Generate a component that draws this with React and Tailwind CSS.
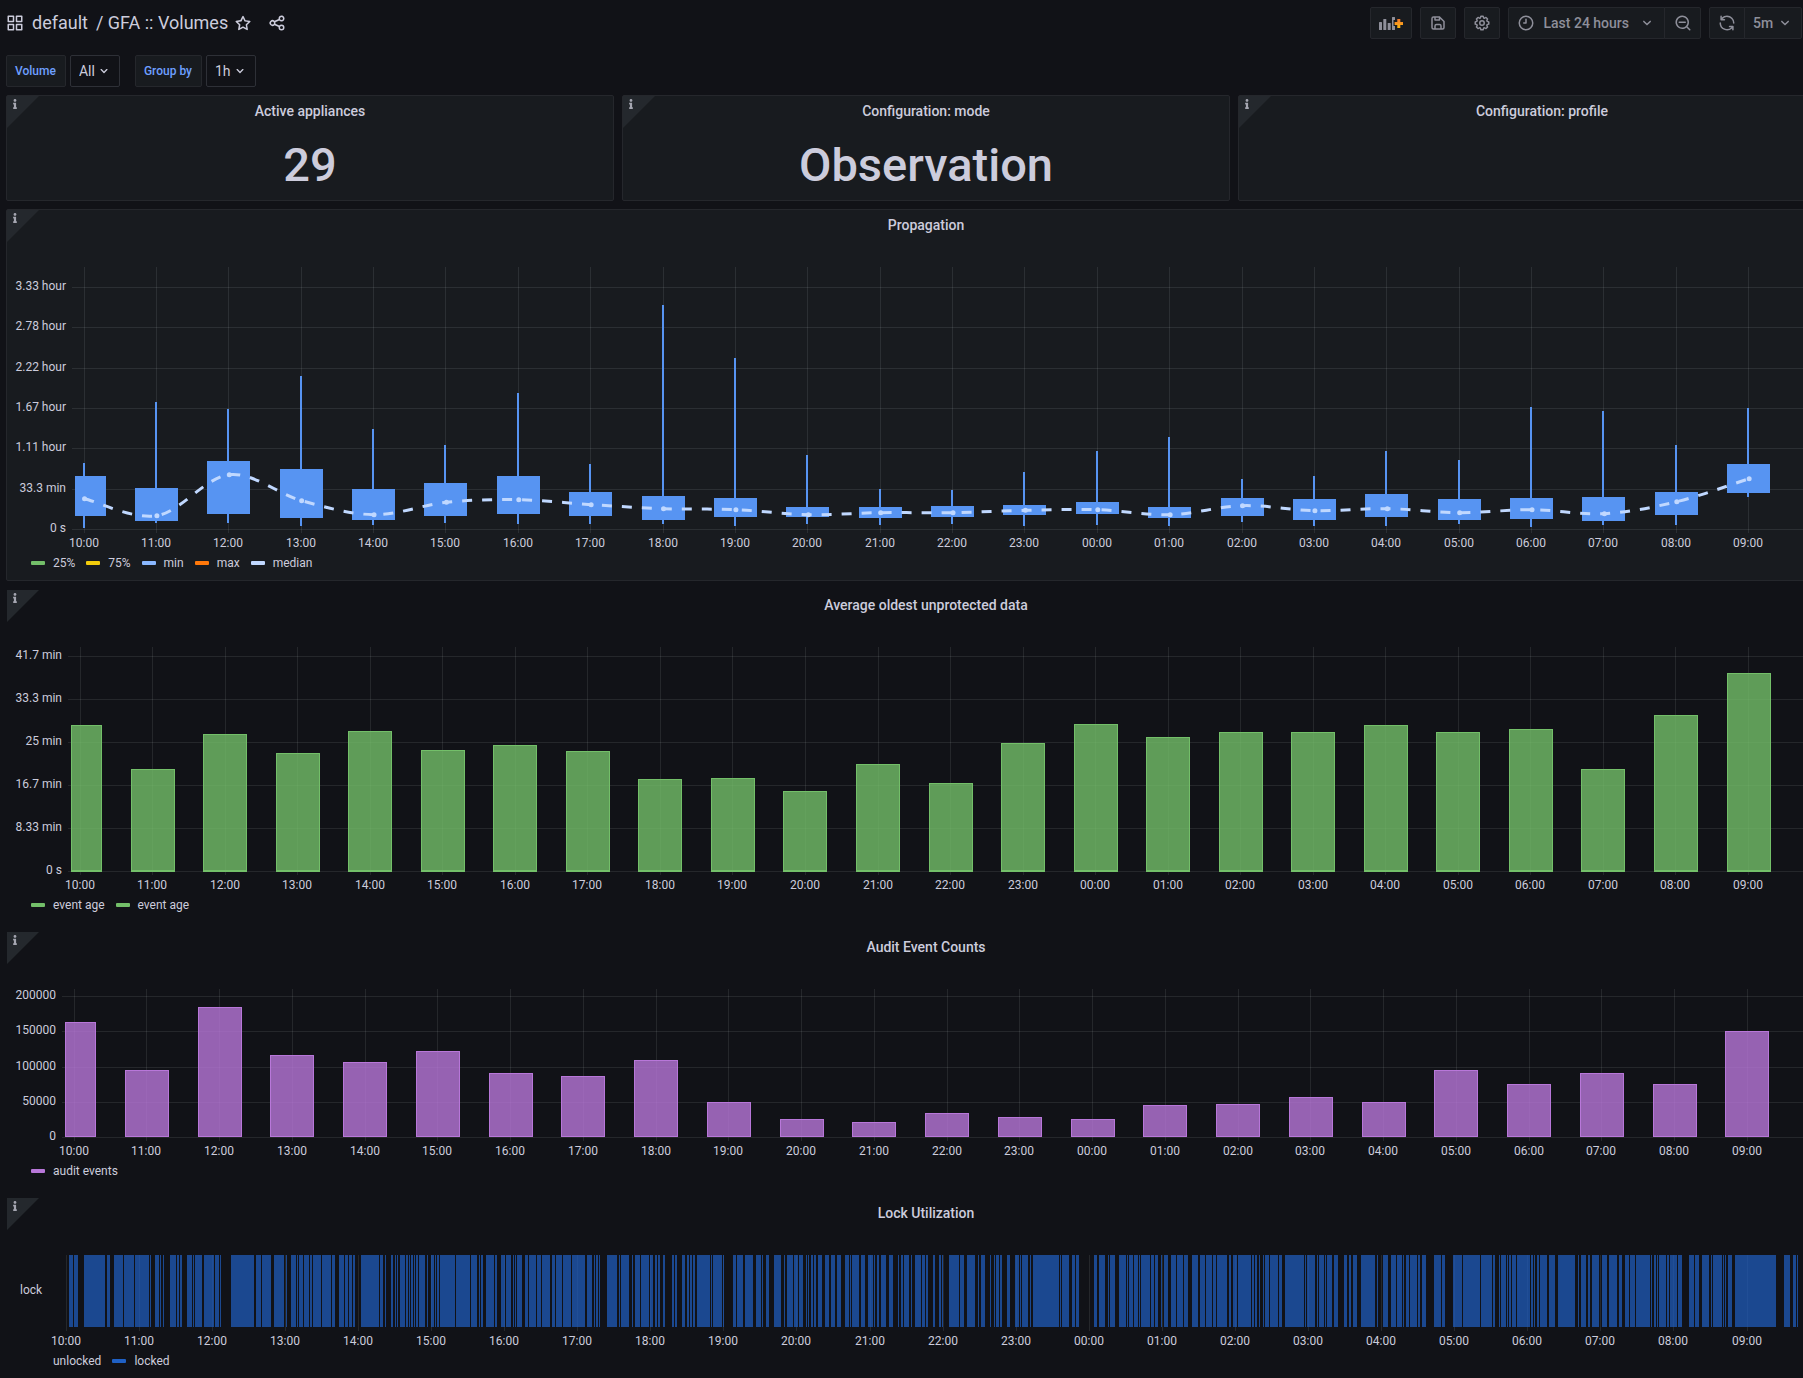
import { useLayoutEffect, useRef, useState } from "react";
import { FaInfo } from "react-icons/fa";

const ICONS = {
  apps: "M10,13H3a1,1,0,0,0-1,1v7a1,1,0,0,0,1,1h7a1,1,0,0,0,1-1V14A1,1,0,0,0,10,13ZM9,20H4V15H9ZM21,2H14a1,1,0,0,0-1,1v7a1,1,0,0,0,1,1h7a1,1,0,0,0,1-1V3A1,1,0,0,0,21,2ZM20,9H15V4h5Zm1,4H14a1,1,0,0,0-1,1v7a1,1,0,0,0,1,1h7a1,1,0,0,0,1-1V14A1,1,0,0,0,21,13Zm-1,7H15V15h5ZM10,2H3A1,1,0,0,0,2,3v7a1,1,0,0,0,1,1h7a1,1,0,0,0,1-1V3A1,1,0,0,0,10,2ZM9,9H4V4H9Z",
  star: "M22,9.67A1,1,0,0,0,21.14,9l-5.69-.83L12.9,3a1,1,0,0,0-1.8,0L8.55,8.16,2.86,9a1,1,0,0,0-.81.68,1,1,0,0,0,.25,1l4.13,4-1,5.68A1,1,0,0,0,6.9,21.44L12,18.77l5.1,2.67a.93.93,0,0,0,.46.12,1,1,0,0,0,.59-.19,1,1,0,0,0,.4-1l-1-5.68,4.13-4A1,1,0,0,0,22,9.67Zm-6.15,4a1,1,0,0,0-.29.88l.72,4.2-3.76-2a1.06,1.06,0,0,0-.94,0l-3.76,2,.72-4.2a1,1,0,0,0-.29-.88l-3-3,4.21-.61a1,1,0,0,0,.76-.55L12,5.7l1.88,3.82a1,1,0,0,0,.76.55l4.21.61Z",
  share: "M18,14a4,4,0,0,0-3.08,1.48l-5.1-2.35a3.64,3.64,0,0,0,0-2.26l5.1-2.35A4,4,0,1,0,14,6a4.17,4.17,0,0,0,.07.71L8.79,9.14a4,4,0,1,0,0,5.72l5.28,2.43A4.17,4.17,0,0,0,14,18a4,4,0,1,0,4-4ZM18,4a2,2,0,1,1-2,2A2,2,0,0,1,18,4ZM6,14a2,2,0,1,1,2-2A2,2,0,0,1,6,14Zm12,6a2,2,0,1,1,2-2A2,2,0,0,1,18,20Z",
  save: "m20.71 9.29-6-6a1 1 0 0 0-.32-.21A1.09 1.09 0 0 0 14 3H6a3 3 0 0 0-3 3v12a3 3 0 0 0 3 3h12a3 3 0 0 0 3-3v-8a1 1 0 0 0-.29-.71ZM9 5h4v2H9Zm6 14H9v-3a1 1 0 0 1 1-1h4a1 1 0 0 1 1 1Zm4-1a1 1 0 0 1-1 1h-1v-3a3 3 0 0 0-3-3h-4a3 3 0 0 0-3 3v3H6a1 1 0 0 1-1-1V6a1 1 0 0 1 1-1h1v3a1 1 0 0 0 1 1h6a1 1 0 0 0 1-1V6.41l4 4Z",
  cog: "M21.32,9.55l-1.89-.63.89-1.78A1,1,0,0,0,20.13,6L18,3.87a1,1,0,0,0-1.15-.19l-1.78.89-.63-1.89A1,1,0,0,0,13.5,2h-3a1,1,0,0,0-.95.68L8.92,4.57,7.14,3.68A1,1,0,0,0,6,3.87L3.87,6a1,1,0,0,0-.19,1.15l.89,1.78-1.89.63A1,1,0,0,0,2,10.5v3a1,1,0,0,0,.68.95l1.89.63-.89,1.78A1,1,0,0,0,3.87,18L6,20.13a1,1,0,0,0,1.15.19l1.78-.89.63,1.89a1,1,0,0,0,.95.68h3a1,1,0,0,0,.95-.68l.63-1.89,1.78.89A1,1,0,0,0,18,20.13L20.13,18a1,1,0,0,0,.19-1.15l-.89-1.78,1.89-.63A1,1,0,0,0,22,13.5v-3A1,1,0,0,0,21.32,9.55ZM20,12.78l-1.2.4A2,2,0,0,0,17.64,16l.57,1.14-1.1,1.1L16,17.64a2,2,0,0,0-2.79,1.16l-.4,1.2H11.22l-.4-1.2A2,2,0,0,0,8,17.64l-1.14.57-1.1-1.1L6.36,16A2,2,0,0,0,5.2,13.18L4,12.78V11.22l1.2-.4A2,2,0,0,0,6.36,8L5.79,6.89l1.1-1.1L8,6.36A2,2,0,0,0,10.82,5.2l.4-1.2h1.56l.4,1.2A2,2,0,0,0,16,6.36l1.14-.57,1.1,1.1L17.64,8a2,2,0,0,0,1.16,2.79l1.2.4ZM12,8a4,4,0,1,0,4,4A4,4,0,0,0,12,8Zm0,6a2,2,0,1,1,2-2A2,2,0,0,1,12,14Z",
  clock: "M12,2A10,10,0,1,0,22,12,10,10,0,0,0,12,2Zm0,18a8,8,0,1,1,8-8A8,8,0,0,1,12,20ZM12,6a1,1,0,0,0-1,1v4H9a1,1,0,0,0,0,2h3a1,1,0,0,0,1-1V7A1,1,0,0,0,12,6Z",
  zoomOut: "M21.71,20.29,18,16.61A9,9,0,1,0,16.61,18l3.68,3.68a1,1,0,0,0,1.42,0A1,1,0,0,0,21.71,20.29ZM11,18a7,7,0,1,1,7-7A7,7,0,0,1,11,18Zm4-8H7a1,1,0,0,0,0,2h8a1,1,0,0,0,0-2Z",
  sync: "M19.91,15.51H15.38a1,1,0,0,0,0,2h2.4A8,8,0,0,1,4,12a1,1,0,1,0-2,0,10,10,0,0,0,16.88,7.23V21a1,1,0,0,0,2,0V16.5A1,1,0,0,0,19.91,15.51ZM12,2A10,10,0,0,0,5.12,4.77V3a1,1,0,0,0-2,0V7.5a1,1,0,0,0,1,1h4.5a1,1,0,0,0,0-2H6.22A8,8,0,0,1,20,12a1,1,0,0,0,2,0A10,10,0,0,0,12,2Z",
  angleDown: "M17,9.17a1,1,0,0,0-1.41,0L12,12.71,8.46,9.17a1,1,0,0,0-1.41,0,1,1,0,0,0,0,1.42l4.24,4.24a1,1,0,0,0,1.42,0L17,10.59A1,1,0,0,0,17,9.17Z",
};

function Icon({ name, size = 18, className = "" }) {
  return (
    <svg width={size} height={size} viewBox="0 0 24 24" fill="currentColor" aria-hidden="true" className={`shrink-0 ${className}`}>
      <path d={ICONS[name]} />
    </svg>
  );
}

function AddPanelIcon() {
  return (
    <svg width="24" height="16" viewBox="0 0 24 16" aria-hidden="true">
      <defs>
        <linearGradient id="plus" x1="0" y1="0" x2="0" y2="1">
          <stop offset="0" stopColor="#f2762e" />
          <stop offset="1" stopColor="#fbb90f" />
        </linearGradient>
      </defs>
      <g fill="currentColor">
        <rect x="0" y="7" width="3" height="8" rx="0.5" />
        <rect x="4.3" y="4" width="3" height="11" rx="0.5" />
        <rect x="8.7" y="8" width="3" height="7" rx="0.5" />
        <path d="M13 2.5a.5.5 0 0 1 .5-.5h2a.5.5 0 0 1 .5.5V5h-1.500v6H16v3.500a.5.5 0 0 1-.5.5h-2a.5.5 0 0 1-.5-.5z" />
      </g>
      <path d="M18.300 4h3v3H24v3h-2.700v3h-3v-3h-2.700V7h2.700z" fill="url(#plus)" />
    </svg>
  );
}

const HOURS = Array.from({ length: 24 }, (_, i) => `${String((i + 10) % 24).padStart(2, "0")}:00`);

// Box plot samples: [max, 75%, 25%, min, median]; 121 units are 33.3 minutes.
const PROPAGATION = [
  [199, 160, 38, 4, 91], [382, 124, 23, 17, 40], [361, 205, 44, 17, 163], [460, 181, 32, 8, 85],
  [301, 121, 26, 11, 43], [253, 139, 38, 17, 80], [409, 160, 44, 14, 88], [196, 112, 38, 14, 73],
  [673, 100, 28, 14, 61], [514, 94, 35, 8, 58], [223, 67, 35, 14, 43], [121, 67, 32, 11, 49],
  [118, 70, 35, 14, 49], [172, 73, 41, 8, 56], [235, 82, 44, 11, 58], [277, 67, 32, 8, 43],
  [151, 94, 38, 20, 70], [160, 91, 26, 8, 55], [235, 106, 35, 8, 61], [208, 91, 26, 14, 49],
  [367, 94, 29, 5, 58], [355, 97, 23, 11, 46], [253, 112, 41, 11, 82], [364, 196, 109, 97, 151],
];

// Average age; 129 units are 8.33 minutes.
const EVENT_AGE = [
  439, 307, 412, 355, 421, 364, 379, 361, 277, 280, 241, 322, 265, 385, 442, 403, 418, 418, 439, 418, 427, 307, 469, 595,
];

// Event counts; 106 units are 50000 events.
const AUDIT_EVENTS = [
  345, 202, 391, 247, 226, 259, 193, 184, 232, 106, 55, 46, 73, 61, 55, 97, 100, 121, 106, 202, 160, 193, 160, 319,
];

// Locked spans in three recording blocks: `from` and `unit` are in hours after 10:00.
const LOCKED = [
  {
    from: -0.9057,
    unit: 0.0052353,
    spans: "180-191,192.5-204,220-274,280-287,298-322,324-351,353-390,392-395,405-416,418-421,426-429,444-461,463-468,470-476,489-502,504-507,509-528,533-560,562-573,575-578,604-665,669-683,685-708,716-743,747-750,760-775,777-779,781-792,794-809,811-816,818-820,822-839,841-866,868-875,886-899,902-909,912-920,923-928,943-991,993-1001,1006-1009,1022-1027,1032-1035,1037-1040,1045-1058,1061-1066,1069-1071,1074-1079,1082-1085,1087-1092,1095-1111,1116-1119,1126-1134,1136-1139,1142-1147,1150-1189,1191-1229,1231-1247,1252-1254,1257-1262,1270-1291,1294-1299,1309-1320,1322-1335,1341-1343,1346-1348,1351-1364,1372-1380,1382-1401,1403-1414,1416-1437,1443-1450,1453-1469,1471-1492,1495-1529,1534-1547,1552-1555,1557-1562,1565-1568",
  },
  {
    from: 7.3033,
    unit: 0.0052353,
    spans: "18-44,50-52,55-76,84-86,91-105,107-128,131-139,144-149,152-157,165-170,188-193,196-201,214-222,227-233,235-240,243-248,253-287,290-292,295-319,321-324,348-355,358-374,379-400,408-421,423-426,434-442,455-473,481-483,489-504,507-517,520-531,538-541,543-546,551-557,559-564,570-580,588-598,604-614,619-630,640-651,653-656,659-677,682-693,700-714,716-719,724-729,734-747,755-766,779-781,787-792,794-808,813-815,823-839,841-849,852-857,870-875,886-891,893-896,912-938,941-951,959-980,988-990,996-1006,1019-1022,1030-1032,1035-1043,1045-1051,1064-1071,1085-1095,1097-1100,1103-1120,1124-1126,1132-1200,1202-1205,1207-1226,1233-1241,1244-1252,1291-1299,1304-1320,1328-1330,1333-1346,1356-1375,1377-1380,1382-1393,1396-1406,1408-1411,1414-1437,1440-1448,1450-1458,1466-1469,1474-1484,1492-1505,1508-1524,1526-1537,1547-1563",
  },
  {
    from: 15.5124,
    unit: 0.0052616,
    spans: "0-13,16-31,34-42,44-70,75-82,86-96,99-133,135-140,143-148,153-156,164-167,169-179,182-203,205-213,221-270,273-275,278-299,304-307,309-322,325-327,330-343,348-359,374-382,387-393,398-408,419-455,460-463,476-489,497-510,512-525,528-530,536-544,546-564,567-572,577-588,608-627,629-637,658-681,684-728,731-759,762-767,772-774,777-780,783-796,798-801,803-809,811-822,824-858,861-866,868-871,876-882,884-902,908-923,931-975,983-985,991-1004,1009-1014,1019-1038,1045-1058,1064-1084,1090-1097,1105-1116,1118-1131,1134-1170,1172-1175,1181-1186,1188-1191,1194-1212,1214-1220,1222-1240,1243-1253,1272-1285,1287-1298,1305-1324,1329-1331,1334-1357,1360-1362,1365-1368,1373-1383,1391-1498,1519-1534,1542-1550,1552-1555",
  },
].flatMap(({ from, unit, spans }) =>
  spans.split(",").map((span) => span.split("-").map((n) => from + Number(n) * unit))
);

const GRID = "rgba(240,250,255,0.09)";
const TOP = 27;

// Shared frame: measures its width, draws the grid and axis labels, then the series on top.
function Chart({ label, base, left, right, ticks = [], step = 0, children }) {
  const ref = useRef(null);
  const [width, setWidth] = useState(1200);
  useLayoutEffect(() => {
    const measure = () => setWidth(ref.current.getBoundingClientRect().width);
    measure();
    const observer = new ResizeObserver(measure);
    observer.observe(ref.current);
    return () => observer.disconnect();
  }, []);
  const perHour = (width - right - left) / 24;
  const x = (hour) => left + (hour + 0.125) * perHour;
  const height = base + 24;
  return (
    <div ref={ref} className="w-full">
      <svg width={width} height={height} role="img" aria-label={label} className="block text-xs" fill="#ccccdc">
        <g fill={GRID} shapeRendering="crispEdges">
          {HOURS.map((h, i) => (
            <rect key={h} x={Math.floor(x(i))} y={TOP} width="1" height={base + 4 - TOP} />
          ))}
          {ticks.map((t, i) => (
            <rect key={t} x={left - 3} y={Math.round(base - i * step)} width={width} height="1" />
          ))}
        </g>
        {ticks.map((t, i) => (
          <text key={t} x={left - 9} y={Math.round(base - i * step) + 3} textAnchor="end">
            {t}
          </text>
        ))}
        {children(x)}
        {HOURS.map((h, i) => (
          <text key={h} x={Math.floor(x(i))} y={base + 18} textAnchor="middle">
            {h}
          </text>
        ))}
      </svg>
    </div>
  );
}

function smoothPath(points) {
  const at = (i) => points[Math.max(0, Math.min(points.length - 1, i))];
  let d = `M${at(0)[0]} ${at(0)[1]}`;
  for (let i = 0; i < points.length - 1; i++) {
    const [p0, p1, p2, p3] = [at(i - 1), at(i), at(i + 1), at(i + 2)];
    d += `C${p1[0] + (p2[0] - p0[0]) / 6} ${p1[1] + (p2[1] - p0[1]) / 6} ${p2[0] - (p3[0] - p1[0]) / 6} ${p2[1] - (p3[1] - p1[1]) / 6} ${p2[0]} ${p2[1]}`;
  }
  return d;
}

function PropagationChart() {
  const base = 289;
  const left = 68;
  const y = (v) => base - v / 3;
  return (
    <Chart
      label="Propagation"
      base={base}
      left={left}
      right={33}
      step={40.33}
      ticks={["0 s", "33.3 min", "1.11 hour", "1.67 hour", "2.22 hour", "2.78 hour", "3.33 hour"]}
    >
      {(x) => {
        const points = PROPAGATION.map((d, i) => [x(i) + 0.5, y(d[4])]);
        return (
          <>
            <g fill="#5794f2" shapeRendering="crispEdges">
              {PROPAGATION.map(([max, high, low, min], i) => {
                const c = Math.floor(x(i));
                const start = Math.max(left, c - 21);
                return (
                  <g key={i}>
                    <rect x={c - 1} y={y(max)} width="2" height={y(min) - y(max)} />
                    <rect x={start} y={y(high)} width={c + 22 - start} height={y(low) - y(high)} />
                  </g>
                );
              })}
            </g>
            <path d={smoothPath(points)} fill="none" stroke="#c0d8ff" strokeWidth="3" strokeDasharray="10 10" />
            <g fill="#c0d8ff">
              {points.map(([px, py], i) => (
                <circle key={i} cx={px} cy={py} r="2.5" />
              ))}
            </g>
          </>
        );
      }}
    </Chart>
  );
}

function BarChart({ label, data, color, base, left, right, step, ticks, foot }) {
  return (
    <Chart label={label} base={base} left={left} right={right} step={step} ticks={ticks}>
      {(x) => (
        <g fill={color}>
          {data.map((v, i) => {
            const full = Math.round(x(i) - 22);
            const start = Math.max(left, full);
            const width = full + 44 - start;
            const top = Math.round(base - v / 3);
            const bottom = base + foot;
            return (
              <g key={i}>
                <rect x={start} y={top} width={width} height={bottom - top} fillOpacity="0.8" />
                <rect x={start + 0.5} y={top + 0.5} width={width - 1} height={bottom - top - 1} fill="none" stroke={color} />
                {foot > 0 && <rect x={start} y={bottom - 2} width={width} height="2" />}
              </g>
            );
          })}
        </g>
      )}
    </Chart>
  );
}

function LockChart() {
  return (
    <Chart label="Lock Utilization" base={99} left={50} right={34}>
      {(x) => (
        <>
          <text x="13" y="66">lock</text>
          <g fill="#1f60c4" fillOpacity="0.7" shapeRendering="crispEdges">
            {LOCKED.map(([a, b], i) => (
              <rect key={i} x={x(a)} y={TOP} width={x(b) - x(a)} height={72} />
            ))}
          </g>
        </>
      )}
    </Chart>
  );
}

function Legend({ items }) {
  return (
    <ul className="flex h-5 items-center gap-[11px] pl-6 text-xs">
      {items.map(([name, color], i) => (
        <li key={i} className="flex items-center gap-2">
          <span className="h-1 w-3.5 rounded-[1px]" style={{ backgroundColor: color }} />
          {name}
        </li>
      ))}
    </ul>
  );
}

function Panel({ title, plain = false, children }) {
  return (
    <section
      className={`relative rounded-xs border ${plain ? "border-transparent" : "border-[#25272c] bg-[#181b1f]"}`}
    >
      <button aria-label={`About ${title}`} className="absolute top-0 left-0 size-8 bg-[#24282d] [clip-path:polygon(0_0,100%_0,0_100%)]">
        <FaInfo className="absolute top-[3px] left-[3px] size-2.5 text-[#a5a6b1]" />
      </button>
      <h2 className="h-[30px] text-center text-sm leading-[30px] font-medium">{title}</h2>
      {children}
    </section>
  );
}

function StatPanel({ title, value }) {
  return (
    <Panel title={title}>
      <p className="flex h-[74px] items-center justify-center pt-0.5 text-[47px] leading-none font-medium">{value}</p>
    </Panel>
  );
}

function Variable({ id, label, value }) {
  return (
    <div className="flex gap-1">
      <label htmlFor={id} className="flex h-8 items-center rounded-xs border border-[#25272c] bg-[#181b1f] pr-[9px] pl-2 text-xs font-medium text-[#6e9fff]">
        {label}
      </label>
      <div className="relative flex">
        <select id={id} className="h-8 w-[50px] appearance-none rounded-xs border border-[#2e3037] bg-[#111217] pl-2 text-sm">
          <option>{value}</option>
        </select>
        <Icon name="angleDown" size={16} className="pointer-events-none absolute top-2 right-2" />
      </div>
    </div>
  );
}

const TOOL =
  "flex h-8 items-center justify-center border border-[#25272c] bg-[#181b1f] text-[#8e8f9a]";

export default function App() {
  return (
    <main className="min-h-screen overflow-hidden bg-[#111217] pt-[7px] pl-1.5 font-[Roboto,sans-serif] text-[#ccccdc]">
      <header className="flex items-center justify-between pr-px">
        <div className="flex items-center">
          <Icon name="apps" />
          <h1 className="flex gap-2 pr-1.5 pl-2 text-lg leading-8">
            <a href="#folder">default</a>
            <a href="#dashboard">/ GFA :: Volumes</a>
          </h1>
          <button aria-label="Mark as favorite">
            <Icon name="star" />
          </button>
          <button aria-label="Share dashboard" className="ml-4">
            <Icon name="share" />
          </button>
        </div>
        <div className="flex gap-2">
          <button aria-label="Add panel" className={`${TOOL} w-[42px] rounded-xs`}>
            <AddPanelIcon />
          </button>
          <button aria-label="Save dashboard" className={`${TOOL} w-9 rounded-xs`}>
            <Icon name="save" />
          </button>
          <button aria-label="Dashboard settings" className={`${TOOL} w-9 rounded-xs`}>
            <Icon name="cog" />
          </button>
          <div className="flex">
            <button className={`${TOOL} gap-2 rounded-l-xs pr-2 pl-2 text-sm font-medium`}>
              <Icon name="clock" />
              <span className="pr-px">Last 24 hours</span>
              <Icon name="angleDown" />
            </button>
            <button aria-label="Zoom out" className={`${TOOL} -ml-px w-[37px] rounded-r-xs`}>
              <Icon name="zoomOut" />
            </button>
          </div>
          <div className="flex">
            <button aria-label="Refresh" className={`${TOOL} w-9 rounded-l-xs`}>
              <Icon name="sync" />
            </button>
            <div className="relative -ml-px flex">
              <select aria-label="Refresh interval" className={`${TOOL} w-[58px] appearance-none rounded-r-xs pl-2 text-sm font-medium`}>
                <option>5m</option>
              </select>
              <Icon name="angleDown" className="pointer-events-none absolute top-[7px] right-2 text-[#8e8f9a]" />
            </div>
          </div>
        </div>
      </header>

      <div className="mt-4 flex gap-[15px]">
        <Variable id="volume" label="Volume" value="All" />
        <Variable id="group-by" label="Group by" value="1h" />
      </div>

      <div className="-mr-[43px] mt-2 grid gap-2">
        <div className="grid grid-cols-3 gap-2">
          <StatPanel title="Active appliances" value="29" />
          <StatPanel title="Configuration: mode" value="Observation" />
          <StatPanel title="Configuration: profile" />
        </div>

        <Panel title="Propagation">
          <PropagationChart />
          <div className="pb-[7px]">
            <Legend
              items={[["25%", "#73bf69"], ["75%", "#f2cc0c"], ["min", "#8ab8ff"], ["max", "#ff780a"], ["median", "#c0d8ff"]]}
            />
          </div>
        </Panel>

        <Panel title="Average oldest unprotected data" plain>
          <BarChart
            label="Average oldest unprotected data"
            data={EVENT_AGE}
            color="#73bf69"
            base={251}
            left={64}
            right={33}
            step={43}
            foot={1}
            ticks={["0 s", "8.33 min", "16.7 min", "25 min", "33.3 min", "41.7 min"]}
          />
          <div className="pb-[7px]">
            <Legend items={[["event age", "#73bf69"], ["event age", "#73bf69"]]} />
          </div>
        </Panel>

        <Panel title="Audit Event Counts" plain>
          <BarChart
            label="Audit Event Counts"
            data={AUDIT_EVENTS}
            color="#b877d9"
            base={175}
            left={58}
            right={34}
            step={35.25}
            foot={0}
            ticks={["0", "50000", "100000", "150000", "200000"]}
          />
          <div className="pb-[7px]">
            <Legend items={[["audit events", "#b877d9"]]} />
          </div>
        </Panel>

        <Panel title="Lock Utilization" plain>
          <LockChart />
          <Legend items={[["unlocked", "transparent"], ["locked", "#1f60c4"]]} />
        </Panel>
      </div>
    </main>
  );
}
